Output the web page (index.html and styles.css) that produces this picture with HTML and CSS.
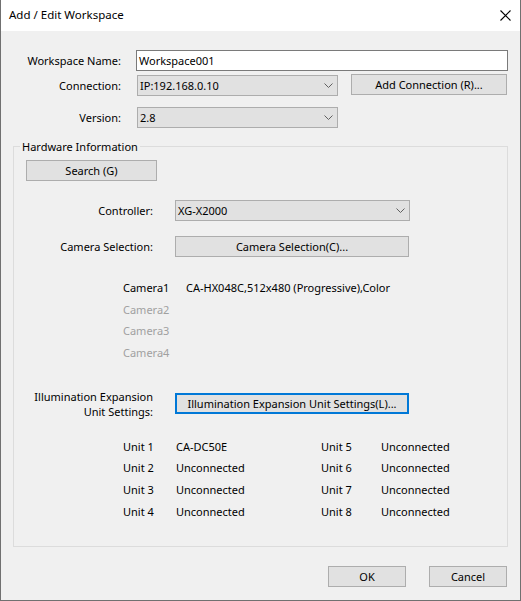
FILE: index.html
```html
<!DOCTYPE html>
<html>
<head>
<meta charset="utf-8">
<title>Add / Edit Workspace</title>
<link rel="stylesheet" href="styles.css">
</head>
<body>
<div class="window">
  <div class="titlebar">
    <span class="title">Add / Edit Workspace</span>
    <svg class="close" width="11" height="11" viewBox="0 0 11 11"><path d="M0.5 0.5L10.5 10.5M10.5 0.5L0.5 10.5" stroke="#000" stroke-width="1.1" fill="none"/></svg>
  </div>
  <div class="content">
    <div class="form">
      <div class="row r1">
        <span class="lbl">Workspace Name:</span>
        <div class="textbox">Workspace001</div>
      </div>
      <div class="row r2">
        <span class="lbl">Connection:</span>
        <div class="combo c-conn"><span>IP:192.168.0.10</span><svg class="chev" width="9" height="5" viewBox="0 0 9 5"><path d="M0.5 0.5L4.5 4.5L8.5 0.5" stroke="#606060" fill="none"/></svg></div>
        <button class="btn b-add">Add Connection (R)...</button>
      </div>
      <div class="row r3">
        <span class="lbl">Version:</span>
        <div class="combo c-conn"><span>2.8</span><svg class="chev" width="9" height="5" viewBox="0 0 9 5"><path d="M0.5 0.5L4.5 4.5L8.5 0.5" stroke="#606060" fill="none"/></svg></div>
      </div>
    </div>

    <fieldset class="group">
      <legend>Hardware Information</legend>
      <button class="btn b-search">Search (G)</button>

      <div class="hrow h-ctrl">
        <span class="hlbl">Controller:</span>
        <div class="combo c-ctrl"><span>XG-X2000</span><svg class="chev" width="9" height="5" viewBox="0 0 9 5"><path d="M0.5 0.5L4.5 4.5L8.5 0.5" stroke="#606060" fill="none"/></svg></div>
      </div>
      <div class="hrow h-cam">
        <span class="hlbl">Camera Selection:</span>
        <button class="btn b-wide">Camera Selection(C)...</button>
      </div>

      <div class="cams">
        <span class="cam">Camera1</span><span class="camval">CA-HX048C,512x480 (Progressive),Color</span>
        <span class="cam off">Camera2</span><span class="camval"></span>
        <span class="cam off">Camera3</span><span class="camval"></span>
        <span class="cam off">Camera4</span><span class="camval"></span>
      </div>

      <div class="hrow h-ill">
        <span class="hlbl two"><span class="ln">Illumination Expansion</span><span class="ln">Unit Settings:</span></span>
        <button class="btn b-wide b-default">Illumination Expansion Unit Settings(L)...</button>
      </div>

      <div class="units">
        <span>Unit 1</span><span>CA-DC50E</span><span>Unit 5</span><span>Unconnected</span>
        <span>Unit 2</span><span>Unconnected</span><span>Unit 6</span><span>Unconnected</span>
        <span>Unit 3</span><span>Unconnected</span><span>Unit 7</span><span>Unconnected</span>
        <span>Unit 4</span><span>Unconnected</span><span>Unit 8</span><span>Unconnected</span>
      </div>
    </fieldset>

    <div class="footer">
      <button class="btn b-foot">OK</button>
      <button class="btn b-foot">Cancel</button>
    </div>
  </div>
</div>
</body>
</html>
```

FILE: styles.css
```css
* { box-sizing: border-box; }
html, body { margin: 0; padding: 0; background: #f0f0f0; }
body {
  font-family: "Noto Sans", "Open Sans", sans-serif;
  font-size: 11px;
  color: #000;
}
.window {
  width: 521px;
  height: 601px;
  border-left: 1px solid #707070;
  border-right: 1px solid #707070;
  border-bottom: 1px solid #707070;
  background: #f0f0f0;
  display: flex;
  flex-direction: column;
}
.titlebar {
  height: 31px;
  background: #fff;
  display: flex;
  align-items: center;
  justify-content: space-between;
  padding: 0 9px 1px 8px;
  flex: none;
}
.title { font-size: 11.5px; line-height: 16px; }
.close { display: block; }

.content { flex: 1; display: flex; flex-direction: column; }

.form { padding-top: 19px; }
.row { display: flex; align-items: center; }
.lbl { width: 120px; text-align: right; flex: none; line-height: 16px; }
.r1 { height: 21px; }
.r1 .textbox { margin-left: 15px; }
.textbox {
  width: 372px;
  height: 21px;
  background: #fff;
  border: 1px solid #7a7a7a;
  padding: 0 2px;
  line-height: 19px;
}
.r2 { margin-top: 3px; height: 22px; align-items: flex-start; }
.r2 .lbl { margin-top: 4px; }
.r2 .combo { margin-top: 1px; }
.r3 { margin-top: 11px; height: 21px; }
.c-conn { margin-left: 16px; width: 201px; }
.combo {
  height: 21px;
  background: #e1e1e1;
  border: 1px solid #adadad;
  display: flex;
  align-items: center;
  justify-content: space-between;
  padding: 0 4px 0 2px;
  line-height: 19px;
}
.chev { display: block; }
.btn {
  font-family: inherit;
  font-size: 11px;
  color: #000;
  height: 21px;
  background: #e1e1e1;
  border: 1px solid #adadad;
  padding: 0;
  margin: 0;
  line-height: 19px;
  text-align: center;
  display: block;
}
.b-add { margin-left: 13px; width: 156px; }

.group {
  margin: 11px 12px 0 12px;
  padding: 0;
  border: 1px solid #dcdcdc;
  height: 408px;
  min-width: 0;
}
.group legend {
  margin-left: 6px;
  padding: 0 2px;
  line-height: 15px;
}
.b-search { margin: 6px 0 0 12px; width: 131px; }

.hrow { display: flex; align-items: center; }
.hlbl { width: 139px; text-align: right; flex: none; line-height: 16px; }
.h-ctrl { margin-top: 19px; height: 21px; }
.h-cam { margin-top: 15px; height: 21px; }
.c-ctrl { margin-left: 22px; width: 235px; }
.b-wide { margin-left: 22px; width: 234px; }
.b-default { border: 2px solid #0078d7; line-height: 17px; }

.cams {
  display: grid;
  grid-template-columns: 63px auto;
  grid-auto-rows: 21.7px;
  align-items: center;
  margin: 20px 0 0 109px;
}
.cam, .camval { line-height: 16px; }
.cam.off { color: #a0a0a0; }

.h-ill { margin-top: 29px; height: 21px; }
.hlbl.two {
  display: flex;
  flex-direction: column;
  align-items: flex-end;
  margin-top: 2px;
}
.hlbl.two .ln { line-height: 15px; height: 15px; display: block; }

.units {
  display: grid;
  grid-template-columns: 53px 145px 60px auto;
  grid-auto-rows: 21.7px;
  align-items: center;
  margin: 22px 0 0 109px;
  line-height: 16px;
}

.footer {
  display: flex;
  justify-content: flex-end;
  gap: 23px;
  margin: 19px 13px 0 0;
}
.b-foot { width: 78px; }
```
